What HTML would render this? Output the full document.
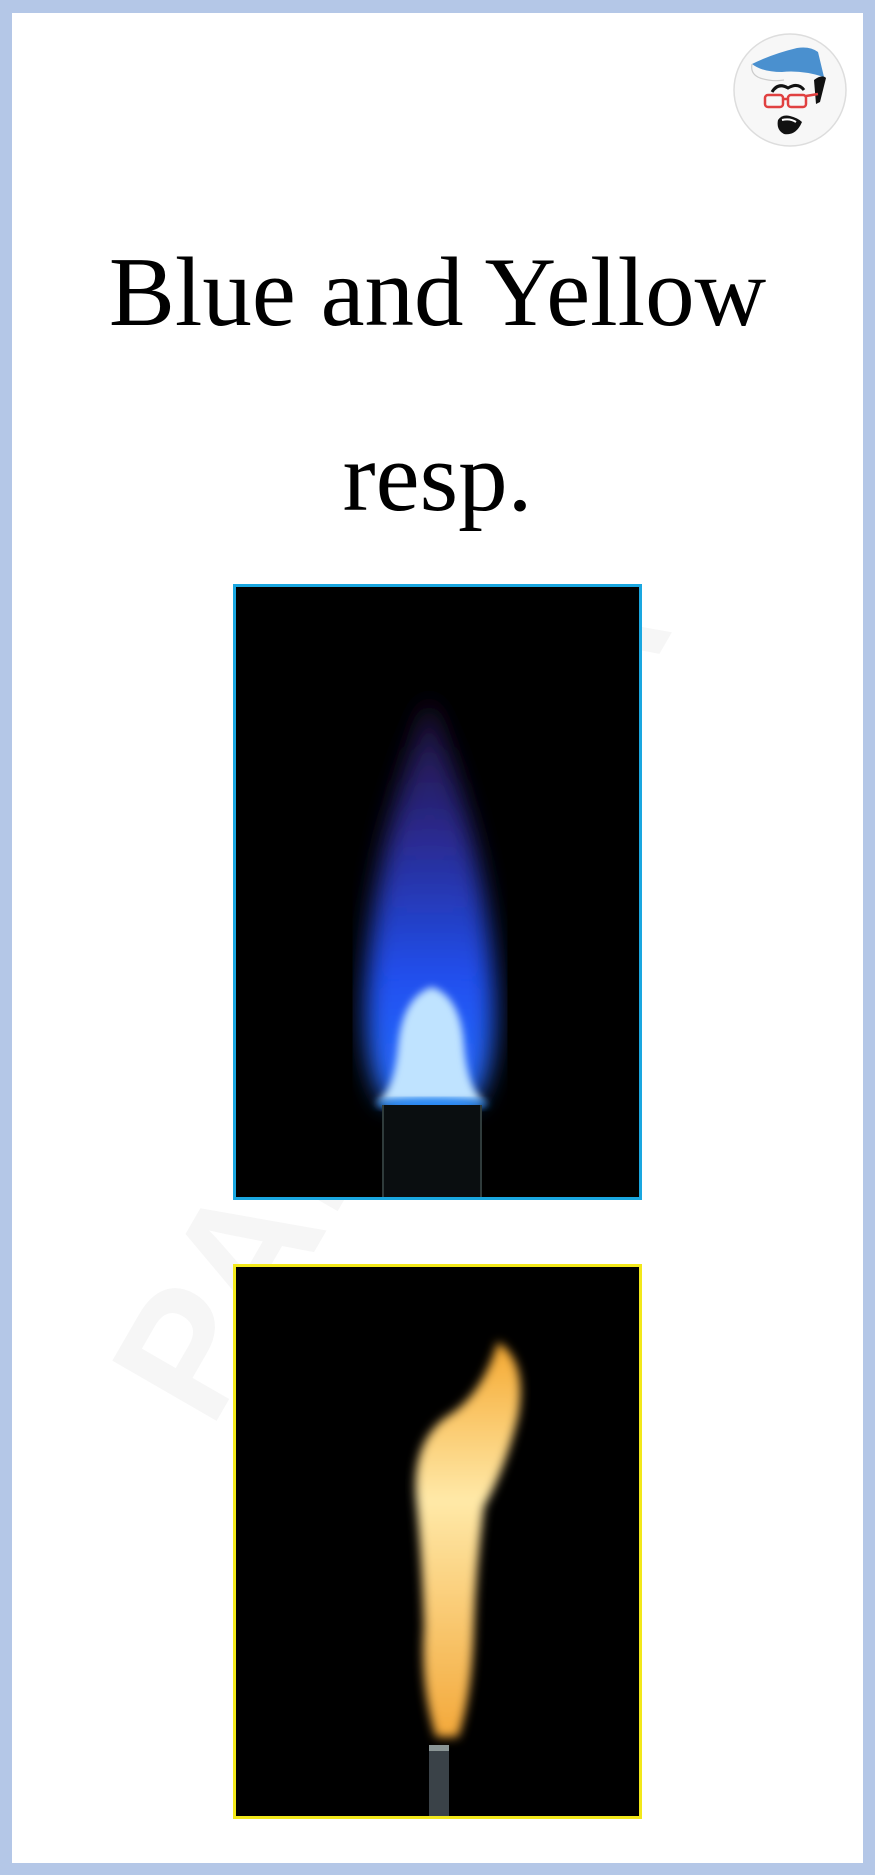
<!DOCTYPE html>
<html><head><meta charset="utf-8"><style>
html,body{margin:0;padding:0;}
body{width:875px;height:1875px;position:relative;background:#b4c7e7;overflow:hidden;font-family:"Liberation Serif",serif;}
.page{position:absolute;left:12px;top:13px;width:851px;height:1850px;background:#fff;}
.t{position:absolute;left:0;width:875px;text-align:center;color:#000;font-size:99px;line-height:1;}
.wm{position:absolute;font:bold 175px "Liberation Sans",sans-serif;color:#f6f6f6;transform:rotate(-60deg);transform-origin:left bottom;letter-spacing:6px;white-space:nowrap;line-height:1;}
.box{position:absolute;left:233px;width:403px;background:#000;}
</style></head><body>
<div class="page"></div>
<div class="wm" style="left:235px;top:1270px;">PADHAIYA</div>
<svg style="position:absolute;left:732px;top:32px" width="116" height="116" viewBox="0 0 116 116">
<circle cx="58" cy="58" r="56" fill="#f7f7f7" stroke="#ddd" stroke-width="1.5"/>
<path d="M20 32 Q40 22 65 16 Q78 14 86 20 L92 45 Q70 38 50 40 Q30 40 20 32Z" fill="#4a90cf"/>
<path d="M20 32 Q18 42 28 46 Q40 50 52 48" fill="none" stroke="#ccc" stroke-width="1.2"/>
<path d="M82 48 Q90 42 94 46 L88 70 L84 72 Z" fill="#111"/>
<path d="M40 60 Q46 50 56 56 Q66 50 72 58" fill="none" stroke="#111" stroke-width="3"/>
<rect x="33" y="63" width="18" height="12" rx="3" fill="none" stroke="#e04040" stroke-width="2.5"/>
<rect x="56" y="63" width="18" height="12" rx="3" fill="none" stroke="#e04040" stroke-width="2.5"/>
<path d="M51 67 L56 67 M74 64 L86 62" stroke="#e04040" stroke-width="2.5"/>
<path d="M46 88 Q50 82 58 84 Q66 86 70 90 Q64 104 52 102 Q44 98 46 88Z" fill="#111"/>
<path d="M50 88 Q58 86 64 90" stroke="#fff" stroke-width="2" fill="none"/>
</svg>
<div class="t" style="top:243px;">Blue and Yellow</div>
<div class="t" style="top:428px;">resp.</div>
<div class="box" style="top:584px;height:610px;border:3px solid #1aa7e0;">
<svg width="403" height="610" viewBox="0 0 403 610">
<defs>
<filter id="b1"><feGaussianBlur stdDeviation="12"/></filter>
<filter id="b2"><feGaussianBlur stdDeviation="4"/></filter>
<linearGradient id="g1" x1="0" y1="0" x2="0" y2="1"><stop offset="0" stop-color="#201030"/><stop offset="0.35" stop-color="#2a2a90"/><stop offset="0.7" stop-color="#1f50f0"/><stop offset="1" stop-color="#2a70ff"/></linearGradient>
</defs>
<path d="M193 110 Q250 260 258 400 Q262 480 238 515 L150 515 Q126 480 130 400 Q138 260 193 110Z" fill="url(#g1)" filter="url(#b1)"/>
<path d="M196 400 Q225 410 228 460 Q232 505 250 515 L140 515 Q158 505 162 460 Q166 410 196 400Z" fill="#bfe3ff" filter="url(#b2)"/>
<ellipse cx="196" cy="517" rx="56" ry="6" fill="#2a8fff" filter="url(#b2)"/>
<rect x="146" y="518" width="100" height="92" fill="#0a0e10"/>
<rect x="146" y="518" width="2" height="92" fill="#2f3b3b"/>
<rect x="244" y="518" width="2" height="92" fill="#2f3b3b"/>
</svg></div>
<div class="box" style="top:1264px;height:549px;border:3px solid #f2e81a;">
<svg width="403" height="549" viewBox="0 0 403 549">
<defs>
<filter id="b3"><feGaussianBlur stdDeviation="5"/></filter>
<linearGradient id="g2" x1="0" y1="0" x2="0" y2="1"><stop offset="0" stop-color="#f5a830"/><stop offset="0.4" stop-color="#ffe9a8"/><stop offset="1" stop-color="#f3a83a"/></linearGradient>
</defs>
<path d="M262 75 Q292 95 282 150 Q270 200 248 240 Q240 300 238 360 Q236 430 222 470 L200 470 Q184 420 188 360 Q186 290 180 230 Q176 175 210 150 Q245 130 262 75Z" fill="url(#g2)" filter="url(#b3)"/>
<rect x="193" y="478" width="20" height="71" fill="#3a4248"/>
<rect x="193" y="478" width="20" height="6" fill="#8a9595"/>
</svg></div>
</body></html>
